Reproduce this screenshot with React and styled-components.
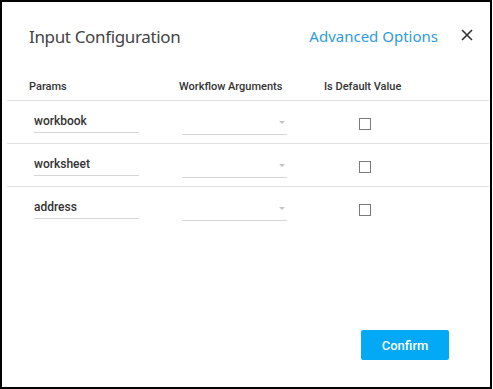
import React from "react";
import styled, { createGlobalStyle } from "styled-components";

const GlobalStyle = createGlobalStyle`
  html, body {
    margin: 0;
    padding: 0;
    background: #fff;
  }
  body {
    font-family: Roboto, "Liberation Sans", sans-serif;
  }
`;

const Frame = styled.div`
  box-sizing: border-box;
  width: 492px;
  height: 389px;
  border: 2px solid #000;
  background: #fff;
  display: flex;
  flex-direction: column;
`;

const Header = styled.div`
  display: flex;
  align-items: center;
  padding: 20px 15px 0 27px;
  height: 28px;
`;

const Title = styled.div`
  flex: 1;
  font-family: "Noto Sans", "Open Sans", sans-serif;
  font-size: 17px;
  color: #444;
  letter-spacing: -0.35px;
`;

const AdvancedLink = styled.a`
  font-family: "Noto Sans", "Open Sans", sans-serif;
  font-size: 15px;
  color: #2e9be0;
  text-decoration: none;
  cursor: pointer;
  margin-right: 23px;
`;

const CloseButton = styled.button`
  border: none;
  background: none;
  padding: 0;
  width: 14px;
  height: 14px;
  display: flex;
  cursor: pointer;
`;

const Table = styled.div`
  margin: 24px 1px 0 5px;
`;

const Row = styled.div`
  display: grid;
  grid-template-columns: 150px 145px 1fr;
  align-items: center;
  height: ${(p) => (p.$head ? "26px" : "42px")};
  border-bottom: ${(p) => (p.$last ? "none" : "1px solid #e0e0e0")};
  padding-left: ${(p) => (p.$head ? "22px" : "27px")};
`;

const HeadCell = styled.div`
  font-size: 11px;
  font-weight: 500;
  color: #333;
  padding-bottom: 1px;
`;

const ParamField = styled.div`
  width: 105px;
  font-size: 12px;
  font-weight: 500;
  color: #333;
  padding-bottom: 4px;
  border-bottom: 1px solid #d6d6d6;
  margin-top: 3px;
`;

const SelectField = styled.div`
  width: 105px;
  height: 14px;
  margin-top: 7px;
  margin-left: -2px;
  padding-bottom: 4px;
  border-bottom: 1px solid #d6d6d6;
  display: flex;
  justify-content: flex-end;
  align-items: center;
`;

const Caret = styled.span`
  width: 0;
  height: 0;
  border-left: 3px solid transparent;
  border-right: 3px solid transparent;
  border-top: 3px solid #c4c4c4;
  margin-right: 2px;
  margin-bottom: 2px;
`;

const CheckBox = styled.span`
  box-sizing: border-box;
  width: 12px;
  height: 12px;
  border: 1px solid #7a7a7a;
  margin-left: 30px;
  margin-top: 4px;
`;

const Footer = styled.div`
  margin-top: auto;
  display: flex;
  justify-content: flex-end;
  padding: 0 41px 27px 0;
`;

const ConfirmButton = styled.button`
  width: 88px;
  height: 30px;
  border: none;
  border-radius: 2px;
  background: #03a9f4;
  color: #fff;
  font-family: Roboto, sans-serif;
  font-size: 13px;
  font-weight: 500;
  cursor: pointer;
`;

const params = ["workbook", "worksheet", "address"];

export default function App() {
  return (
    <>
      <GlobalStyle />
      <Frame>
        <Header>
          <Title>Input Configuration</Title>
          <AdvancedLink>Advanced Options</AdvancedLink>
          <CloseButton aria-label="close">
            <svg width="12" height="12" viewBox="0 0 12 12">
              <path d="M1 1L11 11M11 1L1 11" stroke="#333" strokeWidth="1.6" />
            </svg>
          </CloseButton>
        </Header>
        <Table>
          <Row $head>
            <HeadCell>Params</HeadCell>
            <HeadCell>Workflow Arguments</HeadCell>
            <HeadCell>Is Default Value</HeadCell>
          </Row>
          {params.map((p, i) => (
            <Row key={p} $last={i === params.length - 1}>
              <ParamField>{p}</ParamField>
              <SelectField>
                <Caret />
              </SelectField>
              <CheckBox />
            </Row>
          ))}
        </Table>
        <Footer>
          <ConfirmButton>Confirm</ConfirmButton>
        </Footer>
      </Frame>
    </>
  );
}
